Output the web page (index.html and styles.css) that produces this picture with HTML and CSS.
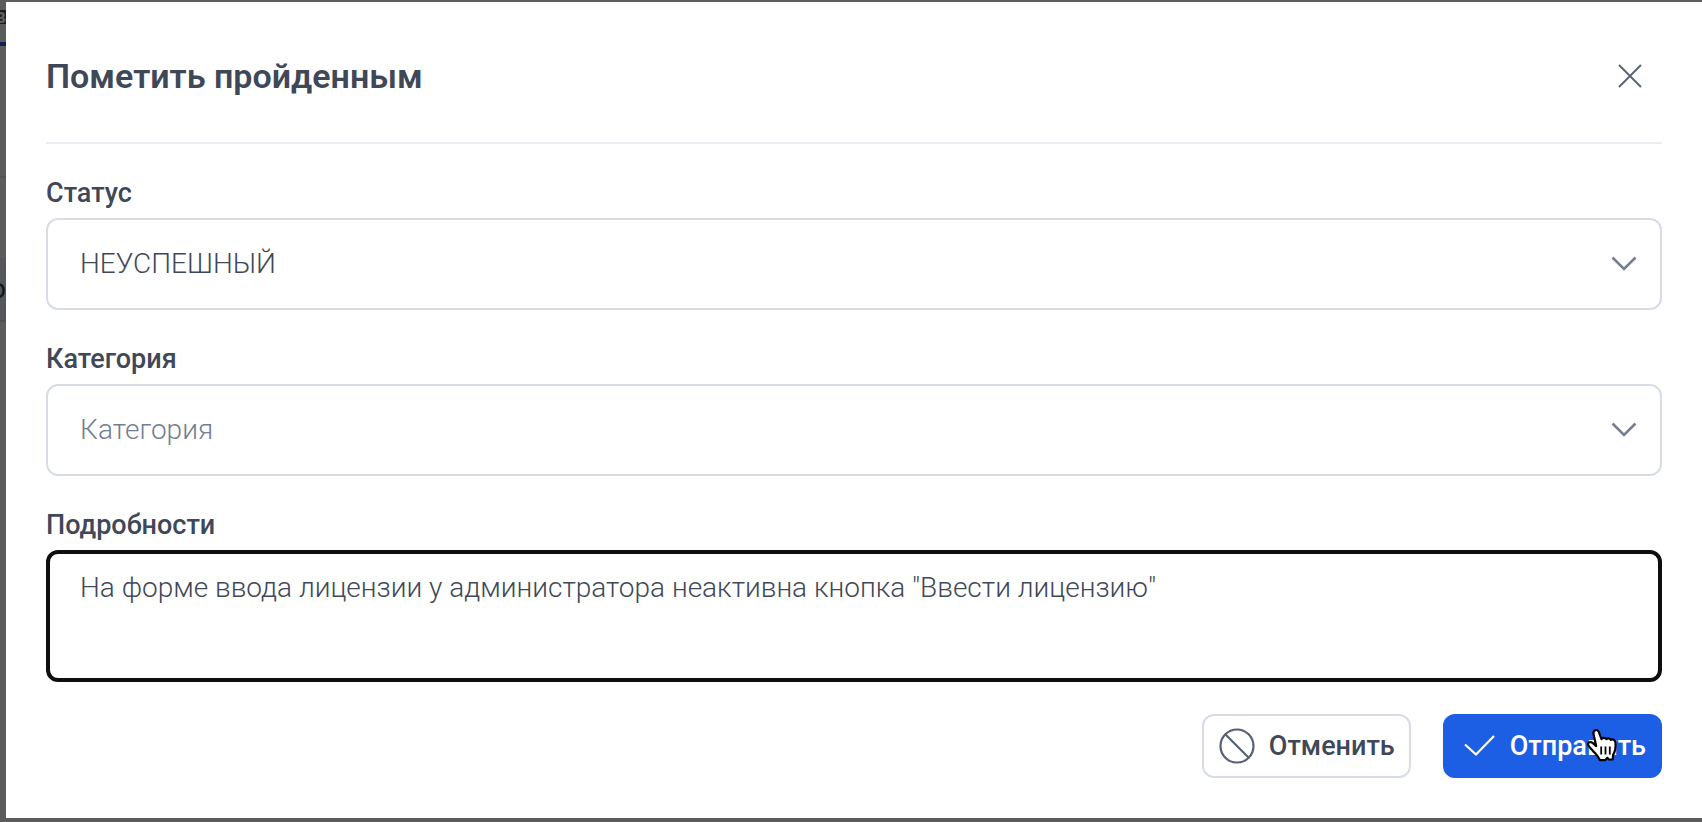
FILE: index.html
```html
<!DOCTYPE html>
<html lang="ru">
<head>
<meta charset="utf-8">
<title>Пометить пройденным</title>
<link rel="stylesheet" href="styles.css">
</head>
<body>
<div class="page" aria-hidden="true">
  <div class="page-tab"><span class="page-badge">в</span></div>
  <div class="page-line"></div>
  <div class="page-row"></div>
  <div class="page-row page-row-selected">о</div>
</div>
<div class="backdrop">
  <form class="modal" role="dialog" aria-labelledby="title">
    <header class="modal-header">
      <h1 class="modal-title" id="title">Пометить пройденным</h1>
      <button class="close" type="button" aria-label="Закрыть">
        <svg width="24" height="24" viewBox="0 0 24 24" fill="none" stroke="currentColor" stroke-width="2"><path d="M1 1L23 23M23 1L1 23"/></svg>
      </button>
    </header>
    <div class="field">
      <label class="label" for="status">Статус</label>
      <div class="select-wrap">
        <select class="select" id="status"><option>НЕУСПЕШНЫЙ</option></select>
        <svg class="chevron" width="26" height="16" viewBox="0 0 26 16" fill="none" stroke="currentColor" stroke-width="2.5"><path d="M1.500 1.500L13 13L24.500 1.500"/></svg>
      </div>
    </div>
    <div class="field">
      <label class="label" for="category">Категория</label>
      <div class="select-wrap">
        <select class="select select-empty" id="category"><option>Категория</option></select>
        <svg class="chevron" width="26" height="16" viewBox="0 0 26 16" fill="none" stroke="currentColor" stroke-width="2.5"><path d="M1.500 1.500L13 13L24.500 1.500"/></svg>
      </div>
    </div>
    <div class="field">
      <label class="label" for="details">Подробности</label>
      <textarea class="details" id="details" spellcheck="false">На форме ввода лицензии у администратора неактивна кнопка "Ввести лицензию"</textarea>
    </div>
    <footer class="actions">
      <button class="button" type="button">
        <svg class="icon" width="36" height="36" viewBox="0 0 36 36" fill="none" stroke="currentColor" stroke-width="2.2"><circle cx="18" cy="18" r="16.500"/><path d="M6 6L30 30"/></svg>
        Отменить
      </button>
      <button class="button button-primary" type="button">
        <svg width="36" height="36" viewBox="0 0 36 36" fill="none" stroke="currentColor" stroke-width="2.2"><path d="M5 16.500L16 26.500L34 8"/></svg>
        Отправить
        <svg class="cursor" width="32" height="36" viewBox="0 0 32 36"><path d="M9.300 3.200C10.800 2.600 12.300 3.600 12.800 5L15.500 12.200C16.500 10.500 19 10.300 20.300 12.200C21.700 10.800 23.900 11 24.900 12.900C27 11.800 29.300 13 29.500 15.500C29.900 20.500 29.500 24 27.200 27.600L26.700 32.500H22.800L21.300 30.800L19.200 33.200H13.800C12.500 29.300 9.400 26.300 6.800 23.700C4.800 21.500 2.700 19.700 2 17.700C1.500 15.300 4.800 14.300 6.600 15.900L10.200 19.100L7.600 7.500C7.200 5.700 7.600 3.900 9.300 3.200Z" fill="#fff" stroke="#000" stroke-width="2.200" stroke-linejoin="round"/><path d="M15.200 19.500V27.500M19.500 19.500V27.500M23.800 19.500V27.500" stroke="#000" stroke-width="1.800"/></svg>
      </button>
    </footer>
  </form>
</div>
</body>
</html>
```
FILE: styles.css
```css
* {
  box-sizing: border-box;
}

body {
  margin: 0;
  min-height: 100vh;
  position: relative;
  overflow: hidden;
  background: #fff;
  color: #3f4858;
  font: 300 28px/34px Roboto, "Open Sans", sans-serif;
}

/* Page under the dialog */
.page {
  position: absolute;
  inset: 0 auto 0 0;
  width: 6px;
  overflow: hidden;
  color: #333a48;
  font-weight: 400;
}

.page-tab {
  height: 42px;
  padding-top: 10px;
}

.page-badge {
  display: flex;
  justify-content: flex-end;
  height: 14px;
  background: #4a4f5c;
  color: #fff;
  font-size: 20px;
  font-weight: 700;
  line-height: 12px;
}

.page-line {
  height: 4px;
  background: #1d5fe4;
}

.page-row {
  height: 132px;
  border-bottom: 2px solid #e8e9ea;
}

.page-row + .page-row {
  display: flex;
  align-items: center;
  justify-content: flex-end;
  height: 64px;
  margin-top: 80px;
  background: #edf1f8;
  border-color: #d8dde5;
}

/* Dialog */
.backdrop {
  position: relative;
  padding: 2px 0 4px 6px;
  background: rgba(0, 0, 0, 0.64);
}

.modal {
  padding: 40px;
  background: #fff;
}

.modal-header {
  display: flex;
  align-items: center;
  justify-content: space-between;
  min-height: 102px;
  padding-bottom: 32px;
  border-bottom: 2px solid #e9edf2;
}

.modal-title {
  margin: 0;
  font-size: 34px;
  font-weight: 600;
  line-height: 44px;
}

.close {
  display: flex;
  padding: 20px;
  border: 0;
  background: none;
  color: #5b6678;
}

.field {
  display: flex;
  flex-direction: column;
  gap: 8px;
  margin-top: 32px;
}

.label {
  font-size: 27px;
  font-weight: 500;
}

.select-wrap {
  position: relative;
}

.select,
.details {
  display: block;
  width: 100%;
  border-radius: 12px;
  background: #fff;
  color: inherit;
  font: inherit;
}

.select {
  appearance: none;
  height: 92px;
  padding: 0 80px 0 32px;
  border: 2px solid #d8dde5;
}

.select-empty {
  color: #737e90;
}

.chevron {
  position: absolute;
  top: 38px;
  right: 25px;
  color: #737e90;
  pointer-events: none;
}

.details {
  height: 132px;
  padding: 17px 30px;
  border: 4px solid #0d0e10;
  outline: 0;
  resize: none;
}

.actions {
  display: flex;
  justify-content: flex-end;
  gap: 32px;
  margin-top: 32px;
}

.button {
  position: relative;
  display: flex;
  align-items: center;
  gap: 14px;
  height: 64px;
  padding: 0 14px 0 15px;
  border: 2px solid #d8dde5;
  border-radius: 12px;
  background: #fff;
  color: inherit;
  font: inherit;
  font-size: 27px;
  font-weight: 500;
}

.icon {
  color: #566172;
}

.button-primary {
  border-color: #1d5fe4;
  background: #1d5fe4;
  color: #fff;
}

.cursor {
  position: absolute;
  top: 11px;
  right: 42px;
}
```
